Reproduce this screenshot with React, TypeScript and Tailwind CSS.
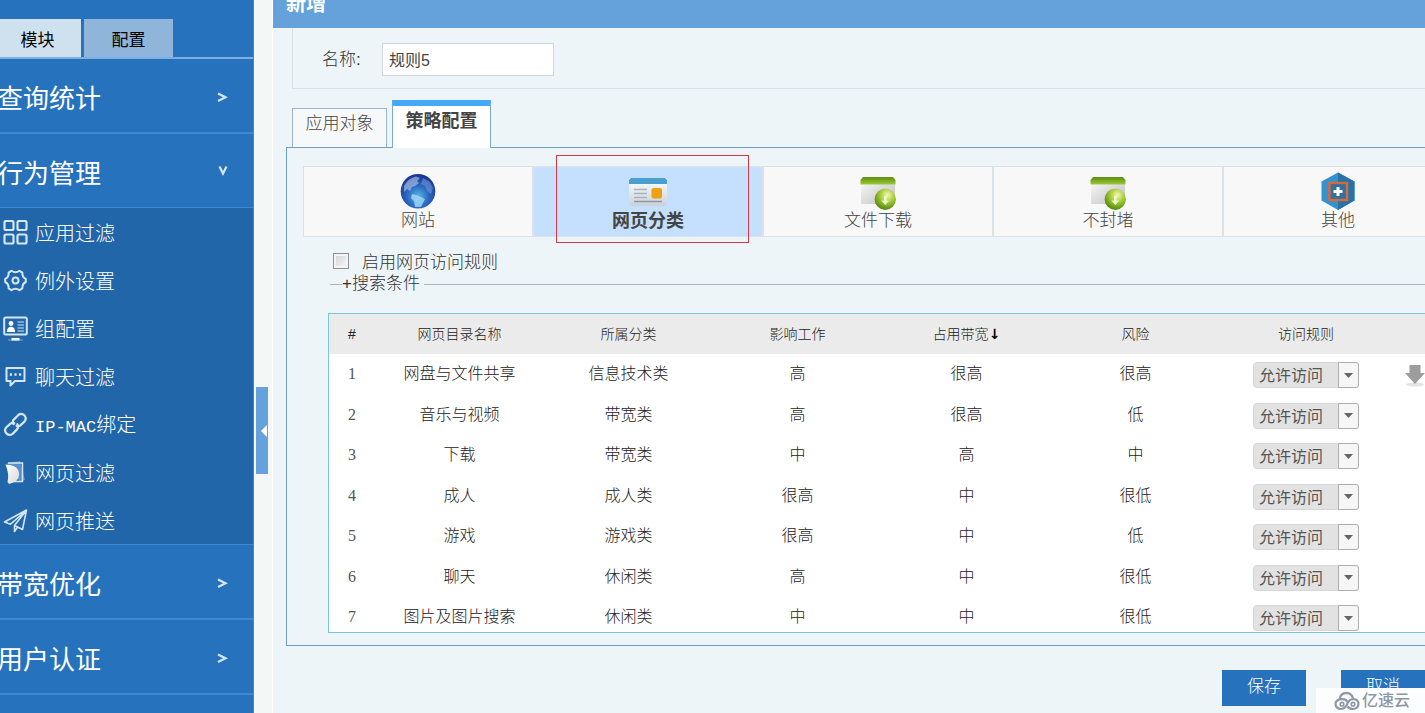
import { ReactNode, useState } from "react";
import clsx from "clsx";

type MenuItem = { label: ReactNode; icon: ReactNode };

const svgProps = {
  width: 25,
  height: 25,
  viewBox: "0 0 25 25",
  fill: "none",
  stroke: "#d3e6f8",
  strokeWidth: 2,
};

const GridIcon = () => (
  <svg {...svgProps} strokeWidth={2.2}>
    <rect x="1.5" y="1" width="9" height="9" rx="1.5" />
    <rect x="14.5" y="1" width="9" height="9" rx="1.5" />
    <rect x="1.5" y="14.5" width="9" height="9" rx="1.5" />
    <rect x="14.5" y="14.5" width="9" height="9" rx="1.5" />
  </svg>
);

const GearIcon = () => (
  <svg {...svgProps} strokeLinejoin="round">
    <path d="M8.5 2.8 Q12.5 5.6 16.5 2.8 L19.4 4.6 Q19 9 22.8 11 V14 Q19 16 19.4 20.4 L16.5 22.2 Q12.5 19.4 8.5 22.2 L5.6 20.4 Q6 16 2.2 14 V11 Q6 9 5.6 4.6 Z" />
    <circle cx="12.5" cy="12.5" r="3" />
  </svg>
);

const MonitorIcon = () => (
  <svg {...svgProps}>
    <rect x="1.2" y="1.5" width="22.6" height="17" rx="1.5" />
    <circle cx="8" cy="7.5" r="2.4" fill="#fff" stroke="none" />
    <path d="M3.8 16 Q4.2 10.8 8 10.8 Q11.8 10.8 12.2 16 Z" fill="#fff" stroke="none" />
    <path d="M14.5 6 H21 M14.5 9 H21 M14.5 12 H21 M14.5 15 H21" strokeWidth="1.2" />
    <path d="M5 24 H20" strokeWidth="1" opacity="0.5" />
    <path d="M8.5 23.2 H16.5" stroke="#fff" strokeWidth="2.6" />
  </svg>
);

const ChatIcon = () => (
  <svg {...svgProps} strokeLinejoin="round">
    <path d="M3.5 4 H21.5 V17 H12 L7.5 21.5 V17 H3.5 Z" />
    <path d="M6.8 10.5 H9 M11.4 10.5 H13.6 M16 10.5 H18.2" strokeWidth="2.4" />
  </svg>
);

const LinkIcon = () => (
  <svg {...svgProps} strokeWidth={2.2} strokeLinecap="round">
    <path d="M10.6 12.2 Q8.8 9.6 11 7.4 L15.4 3 Q18.4 .8 21.4 3.4 Q24 6.4 21.6 9.4 L17.4 13.4 Q15.6 14.8 13.6 13.8" />
    <path d="M14.4 12.2 Q16 15 14 17.4 L9.6 21.8 Q6.4 24.2 3.4 21.4 Q.8 18.4 3.2 15.4 L7.4 11.6 Q9.2 10.4 11.2 11.2" />
  </svg>
);

const PagesIcon = () => (
  <svg {...svgProps}>
    <defs>
      <linearGradient id="page" x1="0" y1="0" x2="1" y2="1">
        <stop offset="0" stopColor="#fff" />
        <stop offset="1" stopColor="#d5dade" />
      </linearGradient>
    </defs>
    <path d="M4 3 L17 1 L22 20 L17 22 Z" fill="#5d8fc2" stroke="none" />
    <path d="M5 3 H19.5 V21.5 H11" strokeWidth="1.5" />
    <path d="M2.5 4.5 L7 5 Q15 6 16 13 Q16.5 19 12 22 L6 24 L4.5 22 Q6.5 14 2.5 4.5 Z" fill="url(#page)" stroke="none" />
  </svg>
);

const PlaneIcon = () => (
  <svg {...svgProps} strokeWidth={1.6} strokeLinejoin="round">
    <path d="M23.5 2 L1.5 14 L7.5 16.2 L22.8 3 L11.5 17.5 L19.5 21.5 Z" />
    <path d="M11.5 17.5 V23.5 L14.5 19.2" />
  </svg>
);

const Chevron = ({ open }: { open?: boolean }) => (
  <svg width="12" height="12" viewBox="0 0 12 12" fill="none" stroke="#d5e6f6" strokeWidth="2.2">
    {open ? <path d="M2.5 1.5 L6 8.5 L9.5 1.5" /> : <path d="M1 3.5 L8.5 7.3 L1 11" />}
  </svg>
);

const GlobeIcon = () => (
  <svg width="36" height="36" viewBox="0 0 36 36">
    <defs>
      <radialGradient id="globe" cx="0.5" cy="0.65" r="0.6">
        <stop offset="0" stopColor="#5db4e8" />
        <stop offset="0.5" stopColor="#2c6cc2" />
        <stop offset="1" stopColor="#1a3796" />
      </radialGradient>
    </defs>
    <circle cx="18" cy="17.3" r="17.3" fill="url(#globe)" />
    <path d="M4 12 Q8 4 16 2.5 L20 4 L17 7 L19 9 L15 12 L12 13 L10 17 L7 15 L4 18 Z" fill="#b9cbea" opacity="0.6" />
    <path d="M23 4 L30 8 L33 14 L31 20 L27 17 L25 12 L21 10 Z" fill="#6f97d6" opacity="0.6" />
    <path d="M12 20 L19 22 L25 25 L21 33 L15 33 L14 27 L11 24 Z" fill="#a9def5" opacity="0.75" />
  </svg>
);

const WebPageIcon = () => (
  <svg width="40" height="36" viewBox="0 0 40 36">
    <defs>
      <linearGradient id="sheet" x1="0" y1="0" x2="0" y2="1">
        <stop offset="0" stopColor="#fff" />
        <stop offset="1" stopColor="#c9d2dc" />
      </linearGradient>
    </defs>
    <path d="M1 4 H39 V29 Q39 32 36 32 H4 Q1 32 1 29 Z" fill="url(#sheet)" />
    <path d="M3 4 H37 L39 6 V10 H1 V6 Z" fill="#4a9fce" />
    <path d="M6 15.5 H19 M6 19.5 H19 M6 23.5 H19" stroke="#aab2ba" strokeWidth="1.5" />
    <path d="M6 27.5 H34" stroke="#8f979f" strokeWidth="1.5" />
    <rect x="23.5" y="14" width="10.5" height="10.5" rx="2" fill="#eda214" />
  </svg>
);

const DownloadIcon = () => (
  <svg width="38" height="36" viewBox="0 0 38 36">
    <defs>
      <linearGradient id="window" x1="0" y1="0" x2="1" y2="1">
        <stop offset="0" stopColor="#fafafa" />
        <stop offset="1" stopColor="#bdbdbd" />
      </linearGradient>
      <linearGradient id="bar" x1="0" y1="0" x2="0" y2="1">
        <stop offset="0" stopColor="#5b8a10" />
        <stop offset="1" stopColor="#9ccb35" />
      </linearGradient>
      <radialGradient id="ball" cx="0.6" cy="0.3" r="0.75">
        <stop offset="0" stopColor="#f4fab0" />
        <stop offset="0.5" stopColor="#9cc62f" />
        <stop offset="1" stopColor="#4b7d0c" />
      </radialGradient>
    </defs>
    <rect x="2" y="6" width="34" height="24" rx="1" fill="url(#window)" />
    <path d="M4 3 H34 L36.5 6 V10.5 H1.5 V6 Z" fill="url(#bar)" />
    <circle cx="26.3" cy="25.3" r="10.6" fill="url(#ball)" />
    <path d="M25 22 H27.6 V26.5 H30.4 L26.3 31 L22.2 26.5 H25 Z" fill="#f6fbe2" opacity="0.85" />
  </svg>
);

const HexagonIcon = () => (
  <svg width="36" height="38" viewBox="0 0 36 38">
    <path d="M18 0.5 L34.5 9.5 V28.5 L18 38 L1.5 28.5 V9.5 Z" fill="#3592cf" />
    <path d="M18 0.5 L34.5 9.5 V28.5 L18 38 Z" fill="#2a71a5" />
    <rect x="9.5" y="11" width="17.5" height="17" fill="#33709d" stroke="#d9683b" strokeWidth="2.4" />
    <path d="M18 15 V24 M13.5 19.5 H22.5" stroke="#fff" strokeWidth="3" />
  </svg>
);

const ScrollArrow = () => (
  <svg width="20" height="22" viewBox="0 0 20 22">
    <ellipse cx="10" cy="19.5" rx="9" ry="2" fill="#e4e4e4" />
    <path d="M4.5 0 H15.5 V8 H20 L10 19 L0 8 H4.5 Z" fill="#9d9d9d" />
  </svg>
);

const CloudLogo = () => (
  <svg width="26" height="20" viewBox="0 0 26 20" fill="none" stroke="#8d97a6" strokeWidth="2.2">
    <path d="M5.5 9 Q6 2 12.5 1.8 Q17.5 2 19 7.2" />
    <path d="M13.5 11 Q12 8 8 8.2 Q1.5 8.6 1.5 13.2 Q2 18 7 18 Q10.5 18 12.5 14.5 Q15 8 19.5 8 Q24.5 8.5 24.5 13 Q24 18 19 18 Q15.5 18 13.5 15.5" />
    <circle cx="8" cy="13.2" r="1.8" strokeWidth="1.6" />
    <circle cx="19" cy="13.2" r="1.8" strokeWidth="1.6" />
  </svg>
);

const menuItems: MenuItem[] = [
  { label: "应用过滤", icon: <GridIcon /> },
  { label: "例外设置", icon: <GearIcon /> },
  { label: "组配置", icon: <MonitorIcon /> },
  { label: "聊天过滤", icon: <ChatIcon /> },
  {
    label: (
      <>
        <span className="font-['Liberation_Mono'] text-[17px] font-normal">IP-MAC</span>绑定
      </>
    ),
    icon: <LinkIcon />,
  },
  { label: "网页过滤", icon: <PagesIcon /> },
  { label: "网页推送", icon: <PlaneIcon /> },
];

const categories = [
  { label: "网站", icon: <GlobeIcon /> },
  { label: "网页分类", icon: <WebPageIcon /> },
  { label: "文件下载", icon: <DownloadIcon /> },
  { label: "不封堵", icon: <DownloadIcon /> },
  { label: "其他", icon: <HexagonIcon /> },
];

const columns = ["网页目录名称", "所属分类", "影响工作", "占用带宽", "风险"];

const rows = [
  ["网盘与文件共享", "信息技术类", "高", "很高", "很高"],
  ["音乐与视频", "带宽类", "高", "很高", "低"],
  ["下载", "带宽类", "中", "高", "中"],
  ["成人", "成人类", "很高", "中", "很低"],
  ["游戏", "游戏类", "很高", "中", "低"],
  ["聊天", "休闲类", "高", "中", "很低"],
  ["图片及图片搜索", "休闲类", "中", "中", "很低"],
];

function MenuSection({ label, open }: { label: string; open?: boolean }) {
  return (
    <button
      type="button"
      className={clsx(
        "flex w-full items-center justify-between border-[#3f89d2] pr-6 text-[26px] text-white",
        open ? "h-[74px] border-b" : "h-[75px] border-b-2"
      )}
    >
      <span className="-ml-[3px] pt-2">{label}</span>
      <Chevron open={open} />
    </button>
  );
}

function Sidebar() {
  return (
    <aside className="w-[254px] shrink-0 border-r border-[#3f89d2] bg-[#2672bd]">
      <div className="flex h-[59px] items-end gap-[3px] border-b-2 border-[#7db0e0] text-[17px] text-black">
        <button type="button" className="h-[38px] w-[81px] bg-[#cfe0ef] pr-[6px] pt-[6px]">
          模块
        </button>
        <button type="button" className="h-[38px] w-[89px] bg-[#8fb5da] pt-[6px]">
          配置
        </button>
      </div>
      <MenuSection label="查询统计" />
      <MenuSection label="行为管理" open />
      <nav className="border-b border-[#3f89d2] bg-[#2166a8]">
        {menuItems.map((item, index) => (
          <a
            key={index}
            href="#"
            className="flex h-12 items-center gap-[7px] pl-[3px] text-xl font-light text-white"
          >
            {item.icon}
            <span className="pt-[3px]">{item.label}</span>
          </a>
        ))}
      </nav>
      <MenuSection label="带宽优化" />
      <MenuSection label="用户认证" />
    </aside>
  );
}

function RuleSelect({ label }: { label: string }) {
  return (
    <div className="relative mx-auto h-[26px] w-[106px]">
      <select
        aria-label={label}
        className="h-full w-full appearance-none rounded-[4px] border border-[#d6d6d6] bg-[#e2e2e2] pl-[5px] pt-[2px] text-base font-normal leading-none text-[#555]"
      >
        <option>允许访问</option>
        <option>禁止访问</option>
      </select>
      <span className="pointer-events-none absolute inset-y-0 right-0 flex w-[21px] items-center justify-center rounded-r-[3px] border border-[#adadad] bg-[#f6f6f6]">
        <svg width="9" height="5" viewBox="0 0 9 5">
          <path d="M0 0 H9 L4.5 5 Z" fill="#666" />
        </svg>
      </span>
    </div>
  );
}

function RuleTable() {
  return (
    <div className="ml-[41px] mt-[17px] h-[320px] overflow-hidden border border-r-0 border-[#7cc4d8] bg-white">
      <table className="w-full table-fixed text-center text-base font-light text-[#222]">
        <thead>
          <tr className="h-10 bg-[#ebebeb] text-sm">
            <th className="w-[46px] font-light">#</th>
            {columns.map((column) => (
              <th key={column} className="w-[169px] font-light">
                {column}
                {column === "占用带宽" && <span className="font-['DejaVu_Sans'] font-bold text-black">↓</span>}
              </th>
            ))}
            <th className="w-[172px] font-light">访问规则</th>
            <th />
          </tr>
        </thead>
        <tbody>
          {rows.map((row, index) => (
            <tr key={row[0]} className="h-10 even:h-[41px]">
              <td className="font-['Liberation_Serif'] font-normal text-[#555]">{index + 1}</td>
              {row.map((cell, i) => (
                <td key={i}>{cell}</td>
              ))}
              <td className="pt-[2px]">
                <RuleSelect label={row[0]} />
              </td>
              <td className="pl-[13px] pt-1">{index === 0 && <ScrollArrow />}</td>
            </tr>
          ))}
        </tbody>
      </table>
    </div>
  );
}

export default function App() {
  const [name, setName] = useState("规则5");
  const [active, setActive] = useState("网页分类");
  const [enabled, setEnabled] = useState(false);

  return (
    <div className="relative flex min-h-screen overflow-hidden bg-[#eef5f9] font-['Liberation_Sans','Noto_Sans_CJK_SC',sans-serif]">
      <Sidebar />
      <div className="w-[19px] shrink-0 border-r border-white bg-[#f3f8f7] pl-[2px] pt-[387px]">
        <button
          type="button"
          aria-label="收起菜单"
          className="flex h-[87px] w-3 items-center justify-end bg-[#65a2dc]"
        >
          <svg width="8" height="12" viewBox="0 0 8 12">
            <path d="M7 0 V12 L1 6 Z" fill="#fff" />
          </svg>
        </button>
      </div>

      <main className="min-w-0 flex-1 overflow-hidden">
        <h1 className="-mt-5 flex h-12 items-center bg-[#65a2dc] pl-[13px] text-xl font-bold text-white">
          新增
        </h1>

        <div className="ml-[19px] flex h-[61px] items-center border-b border-l border-[#d5e2ea] pl-[29px] pt-[2px] text-[17px] text-[#333]">
          <label htmlFor="name" className="w-[60px] pt-[2px] font-light">
            名称:
          </label>
          <input
            id="name"
            value={name}
            onChange={(e) => setName(e.target.value)}
            className="h-[33px] w-[172px] border border-[#cfd6dc] bg-white px-[6px] text-base text-[#444]"
          />
        </div>

        <div className="ml-[19px] flex h-[58px] items-end gap-[5px] text-[#444]">
          <button
            type="button"
            className="h-[39px] w-[95px] border border-b-0 border-[#9ab6d3] bg-[#f7f8f9] pb-2 text-[17px] font-light"
          >
            应用对象
          </button>
          <button
            type="button"
            className="relative z-10 -mb-px h-12 w-[99px] border-x border-t-[6px] border-x-[#7fa8cf] border-t-[#45a9f9] bg-white pb-3 text-lg font-bold leading-6 text-[#444]"
          >
            策略配置
          </button>
        </div>

        <section className="ml-[13px] h-[499px] border border-r-0 border-[#6f9fc4]">
          <div className="ml-4 mt-[18px] flex h-[71px] border-y border-l border-[#dce1e6] text-[17px] text-[#444]">
            {categories.map(({ label, icon }) => (
              <button
                key={label}
                type="button"
                onClick={() => setActive(label)}
                className={clsx(
                  "relative flex w-[230px] shrink-0 flex-col items-center justify-end border-r-2 border-[#dce1e6] pb-1",
                  active === label ? "bg-[#c5e0ff] text-lg font-bold text-[#444]" : "bg-[#f8f8f8] font-light"
                )}
              >
                {icon}
                <span className="leading-[22px]">{label}</span>
                {active === label && (
                  <span className="absolute -top-3 left-[22px] h-[88px] w-[193px] border border-[#d43a45]" />
                )}
              </button>
            ))}
          </div>

          <div className="ml-[46px] mt-4 flex h-4 items-center gap-[13px] text-[17px] font-light text-[#333]">
            <input
              id="enabled"
              type="checkbox"
              checked={enabled}
              onChange={(e) => setEnabled(e.target.checked)}
              className="size-4 appearance-none border border-[#8e9296] bg-linear-to-br from-[#cfd2d5] to-[#f8f8f8] shadow-[inset_0_0_0_2px_#f4f4f4] checked:bg-[#2672bd]"
            />
            <label htmlFor="enabled" className="pt-1">
              启用网页访问规则
            </label>
          </div>

          <fieldset className="ml-[43px] mt-[3px] border-t border-[#a9b6bf]">
            <legend className="ml-3 pr-1 text-[17px] font-light leading-6 text-[#333]">
              <button type="button">+搜索条件</button>
            </legend>
          </fieldset>

          <RuleTable />
        </section>

        <div className="mt-6 flex justify-end gap-[35px] text-[17px] font-light text-white">
          <button type="button" className="h-9 w-[84px] bg-[#2672bd] pb-[2px]">
            保存
          </button>
          <button type="button" className="h-9 w-[84px] bg-[#2672bd] pb-[2px]">
            取消
          </button>
        </div>
      </main>

      <div className="absolute bottom-0 right-0 z-20 flex h-[25px] w-[109px] items-center gap-[2px] bg-[#fcfdfe] pl-[18px] text-base font-medium text-[#8d97a6]">
        <CloudLogo />
        亿速云
      </div>
    </div>
  );
}
